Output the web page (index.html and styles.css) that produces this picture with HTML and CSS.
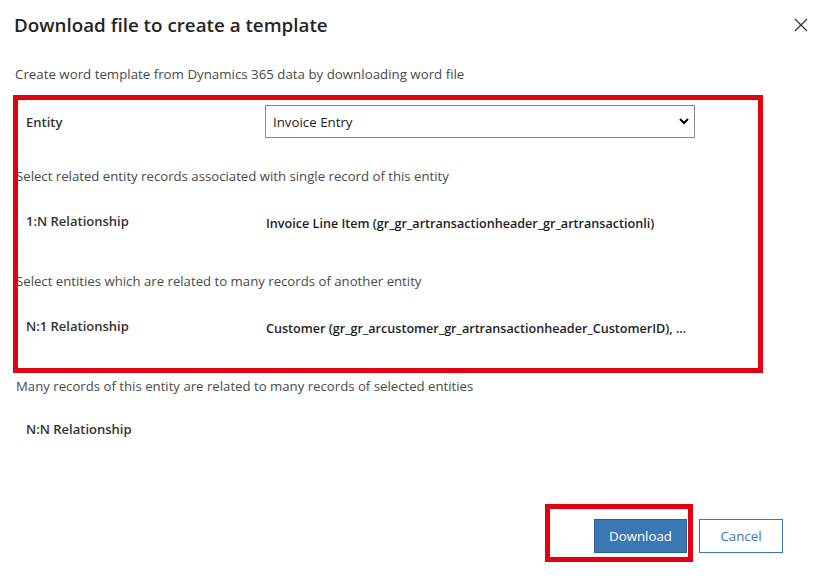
FILE: index.html
```html
<!DOCTYPE html>
<html>
<head>
  <meta charset="UTF-8">
  <title>Download file to create a template</title>
  <link rel="stylesheet" href="styles.css">
</head>
<body>
  <div class="dialog">
    <div class="dialog-header">
      <h1 class="dialog-title">Download file to create a template</h1>
      <button class="close-btn" type="button" aria-label="Close">
        <svg width="14" height="14" viewBox="0 0 14 14">
          <path d="M1 1 L13 13 M13 1 L1 13" stroke="#333" stroke-width="1.3" fill="none"/>
        </svg>
      </button>
    </div>

    <div class="subtitle">Create word template from Dynamics 365 data by downloading word file</div>

    <div class="field-row entity-row">
      <div class="field-label">Entity</div>
      <div class="select-wrap">
        <select id="entity" name="entity">
          <option value="invoice" selected>Invoice Entry</option>
        </select>
        <svg class="chevron" width="10" height="7" viewBox="0 0 10 7">
          <path d="M1 1 L5 5 L9 1" stroke="#000" stroke-width="2" fill="none"/>
        </svg>
      </div>
    </div>

    <div class="desc desc-first">Select related entity records associated with single record of this entity</div>
    <div class="field-row rel-row">
      <div class="field-label">1:N Relationship</div>
      <div class="field-value">Invoice Line Item (gr_gr_artransactionheader_gr_artransactionli)</div>
    </div>

    <div class="desc">Select entities which are related to many records of another entity</div>
    <div class="field-row rel-row">
      <div class="field-label">N:1 Relationship</div>
      <div class="field-value">Customer (gr_gr_arcustomer_gr_artransactionheader_CustomerID), ...</div>
    </div>

    <div class="desc">Many records of this entity are related to many records of selected entities</div>
    <div class="field-row rel-row nn-row">
      <div class="field-label">N:N Relationship</div>
    </div>

    <div class="dialog-footer">
      <button class="btn btn-primary" type="button">Download</button>
      <button class="btn btn-secondary" type="button">Cancel</button>
    </div>

    <!-- red callouts drawn on top -->
    <div class="callout callout-fields"></div>
    <div class="callout callout-download"></div>
  </div>
</body>
</html>
```

FILE: styles.css
```css
body {
  margin: 0;
  background-color: #fff;
  font-family: 'Open Sans', 'Noto Sans', Arial, sans-serif;
  color: #323130;
}

.dialog {
  position: relative;
  width: 822px;
  height: 578px;
}

.dialog-header {
  display: flex;
  justify-content: space-between;
  align-items: center;
  padding: 11px 14px 0 14px;
  height: 28px;
}

.dialog-title {
  margin: 0;
  font-size: 18.8px;
  font-weight: 600;
  line-height: 28px;
  color: #252423;
}

.close-btn {
  background: none;
  border: none;
  padding: 0;
  width: 14px;
  height: 14px;
  display: flex;
}

.subtitle {
  margin-top: 26px;
  padding-left: 15px;
  font-size: 13.3px;
  line-height: 18px;
  color: #4a4a4a;
}

.field-row {
  display: flex;
  align-items: center;
}

.field-label {
  width: 239px;
  padding-left: 26px;
  font-size: 13px;
  font-weight: 600;
  color: #333;
  flex-shrink: 0;
}

.entity-row {
  margin-top: 22px;
  height: 33px;
}

.select-wrap {
  position: relative;
  width: 430px;
  height: 33px;
}

.select-wrap select {
  appearance: none;
  width: 100%;
  height: 100%;
  border: 1px solid #8a8886;
  background: #fff;
  padding: 0 0 0 7px;
  font-family: 'Open Sans', 'Noto Sans', Arial, sans-serif;
  font-size: 13.3px;
  color: #222;
}

.chevron {
  position: absolute;
  right: 6px;
  top: 13px;
  pointer-events: none;
}

.desc {
  margin-top: 41px;
  padding-left: 16px;
  font-size: 13.2px;
  line-height: 18px;
  color: #4a4a4a;
}

.desc-first {
  margin-top: 29px;
}

.rel-row {
  margin-top: 26px;
  height: 20px;
}

.field-value {
  padding-left: 1px;
  padding-top: 4px;
  font-size: 12.6px;
  font-weight: 600;
  color: #1e1e1e;
  white-space: nowrap;
}

.nn-row {
  margin-top: 24px;
}

.dialog-footer {
  display: flex;
  justify-content: flex-end;
  gap: 12px;
  margin-top: 80px;
  padding-right: 39px;
}

.btn {
  height: 34px;
  font-family: 'Open Sans', 'Noto Sans', Arial, sans-serif;
  font-size: 13.3px;
  cursor: pointer;
}

.btn-primary {
  width: 93px;
  background-color: #3a77b5;
  border: 1px solid #2b5f93;
  color: #fff;
}

.btn-secondary {
  width: 84px;
  background-color: #fff;
  border: 1px solid #3a77b5;
  color: #3a77b5;
}

.callout {
  position: absolute;
  border: 5px solid #e3000f;
  box-sizing: border-box;
  pointer-events: none;
}

.callout-fields {
  left: 13px;
  top: 95px;
  width: 750px;
  height: 278px;
}

.callout-download {
  left: 545px;
  top: 504px;
  width: 148px;
  height: 58px;
}
```
